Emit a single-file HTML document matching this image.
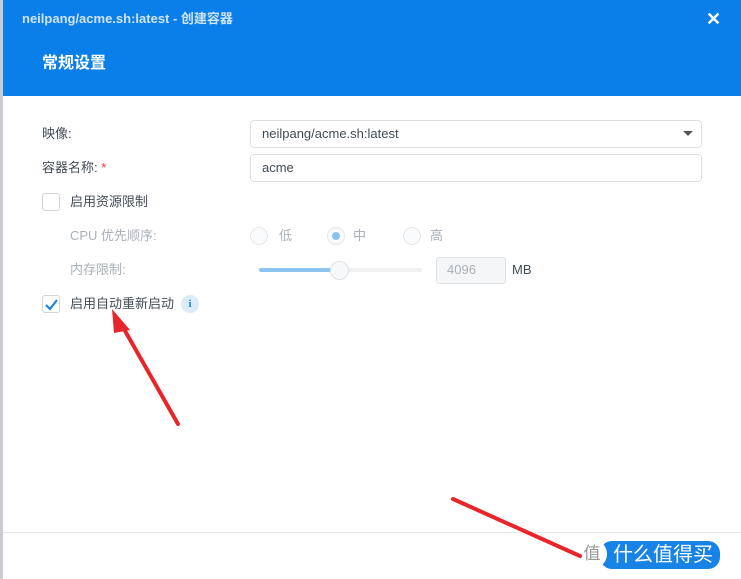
<!DOCTYPE html>
<html><head><meta charset="utf-8"><style>
*{margin:0;padding:0;box-sizing:border-box}
body{width:741px;height:579px;overflow:hidden;background:#fff;font-family:"Liberation Sans","Noto Sans CJK SC",sans-serif;position:relative;color:#414b55}
.abs{position:absolute}
.hdr{left:0;top:0;width:741px;height:96px;background:#0a7fe9}
.t1{left:22px;top:10px;font-size:13px;line-height:18px;font-weight:bold;color:#cfe3fa}
.t2{left:42px;top:54px;font-size:16px;line-height:20px;font-weight:bold;color:#fff}
.x{left:706px;top:9px;color:#fff;font-size:18px;font-weight:bold}
.lbl{font-size:13px;line-height:18px;color:#414b55}
.dim{color:#a9b0b8}
.inp{border:1px solid #dde1e6;border-radius:4px;background:#fff}
.cb{width:18px;height:18px;border:1px solid #cfd5db;border-radius:3px;background:#fff}
.rd{width:18px;height:18px;border:1px solid #e4e7ea;border-radius:50%;background:#fafbfc}
</style></head><body>
<div class="abs hdr"></div>
<div class="abs" style="left:0;top:0;width:3px;height:579px;background:#c9cdd2"></div>
<div class="abs t1">neilpang/acme.sh:latest - 创建容器</div>
<div class="abs t2">常规设置</div>
<div class="abs x">✕</div>

<div class="abs lbl" style="left:42px;top:125px">映像:</div>
<div class="abs inp" style="left:250px;top:120px;width:452px;height:28px"></div>
<div class="abs lbl" style="left:262px;top:125px">neilpang/acme.sh:latest</div>
<div class="abs" style="left:683px;top:131px;border-left:5px solid transparent;border-right:5px solid transparent;border-top:5px solid #555"></div>

<div class="abs lbl" style="left:42px;top:159px">容器名称: <span style="color:#e33">*</span></div>
<div class="abs inp" style="left:250px;top:154px;width:452px;height:28px"></div>
<div class="abs lbl" style="left:262px;top:159px">acme</div>

<div class="abs cb" style="left:42px;top:193px"></div>
<div class="abs lbl" style="left:70px;top:193px">启用资源限制</div>

<div class="abs lbl dim" style="left:70px;top:227px">CPU 优先顺序:</div>
<div class="abs rd" style="left:250px;top:227px"></div>
<div class="abs lbl dim" style="left:279px;top:227px">低</div>
<div class="abs rd" style="left:327px;top:227px"></div>
<div class="abs" style="left:332px;top:232px;width:8px;height:8px;border-radius:50%;background:#8cc3ef"></div>
<div class="abs lbl dim" style="left:353px;top:227px">中</div>
<div class="abs rd" style="left:403px;top:227px"></div>
<div class="abs lbl dim" style="left:430px;top:227px">高</div>

<div class="abs lbl dim" style="left:70px;top:261px">内存限制:</div>
<div class="abs" style="left:259px;top:268px;width:163px;height:4px;border-radius:2px;background:#eef0f2"></div>
<div class="abs" style="left:259px;top:268px;width:80px;height:4px;border-radius:2px;background:#8cc3ef"></div>
<div class="abs" style="left:330px;top:261px;width:19px;height:19px;border-radius:50%;background:#f7f8f9;border:1px solid #dde1e5"></div>
<div class="abs" style="left:436px;top:257px;width:70px;height:27px;border:1px solid #dde1e6;border-radius:3px;background:#f5f6f7"></div>
<div class="abs lbl dim" style="left:447px;top:261px">4096</div>
<div class="abs lbl" style="left:512px;top:261px">MB</div>

<div class="abs cb" style="left:42px;top:295px"></div>
<svg class="abs" style="left:44px;top:297px" width="15" height="15" viewBox="0 0 15 15"><path d="M2 8 L6 12 L13 3" stroke="#1a84e6" stroke-width="2.2" fill="none"/></svg>
<div class="abs lbl" style="left:70px;top:295px">启用自动重新启动</div>
<div class="abs" style="left:181px;top:295px;width:18px;height:18px;border-radius:50%;background:#dcebfa;color:#1a84e6;font-size:11px;font-weight:bold;text-align:center;line-height:18px;font-family:'Liberation Serif',serif">i</div>

<div class="abs" style="left:3px;top:532px;width:738px;height:1px;background:#e6e8eb"></div>
<div class="abs" style="left:600px;top:541px;width:120px;height:28px;border-radius:12px;background:#1783e6"></div>
<div class="abs" style="left:577px;top:539px;width:30px;height:30px;border-radius:50%;background:#fff;color:#999;font-size:17px;text-align:center;line-height:30px">值</div>
<div class="abs" style="left:613px;top:541px;color:#fff;font-size:20px;line-height:28px">什么值得买</div>

<svg class="abs" style="left:0;top:0" width="741" height="579">
<g stroke="#e8262a" stroke-width="4" stroke-linecap="round" fill="none">
<line x1="178" y1="424" x2="120" y2="322"/>
<line x1="453" y1="499" x2="580" y2="556"/>
</g>
<polygon points="112,309 130,330 114,333" fill="#e8262a"/>
</svg>
</body></html>
